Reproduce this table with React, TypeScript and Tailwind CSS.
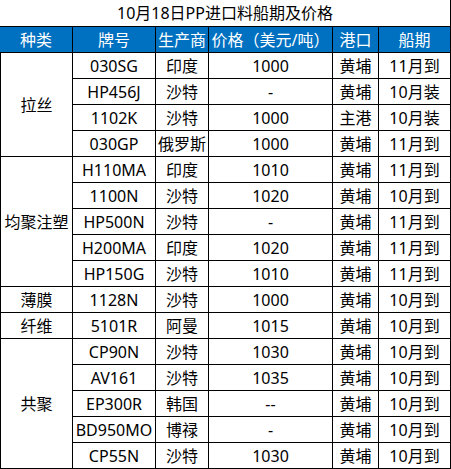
import React from "react";

type Row = { brand: string; origin: string; price: string; port: string; ship: string };

const groups: { name: string; rows: Row[] }[] = [
  {
    name: "拉丝",
    rows: [
      { brand: "030SG", origin: "印度", price: "1000", port: "黄埔", ship: "11月到" },
      { brand: "HP456J", origin: "沙特", price: "-", port: "黄埔", ship: "10月装" },
      { brand: "1102K", origin: "沙特", price: "1000", port: "主港", ship: "10月装" },
      { brand: "030GP", origin: "俄罗斯", price: "1000", port: "黄埔", ship: "11月到" },
    ],
  },
  {
    name: "均聚注塑",
    rows: [
      { brand: "H110MA", origin: "印度", price: "1010", port: "黄埔", ship: "11月到" },
      { brand: "1100N", origin: "沙特", price: "1020", port: "黄埔", ship: "10月到" },
      { brand: "HP500N", origin: "沙特", price: "-", port: "黄埔", ship: "11月到" },
      { brand: "H200MA", origin: "印度", price: "1020", port: "黄埔", ship: "11月到" },
      { brand: "HP150G", origin: "沙特", price: "1010", port: "黄埔", ship: "11月到" },
    ],
  },
  {
    name: "薄膜",
    rows: [{ brand: "1128N", origin: "沙特", price: "1000", port: "黄埔", ship: "10月到" }],
  },
  {
    name: "纤维",
    rows: [{ brand: "5101R", origin: "阿曼", price: "1015", port: "黄埔", ship: "10月到" }],
  },
  {
    name: "共聚",
    rows: [
      { brand: "CP90N", origin: "沙特", price: "1030", port: "黄埔", ship: "10月到" },
      { brand: "AV161", origin: "沙特", price: "1035", port: "黄埔", ship: "10月到" },
      { brand: "EP300R", origin: "韩国", price: "--", port: "黄埔", ship: "10月到" },
      { brand: "BD950MO", origin: "博禄", price: "-", port: "黄埔", ship: "10月到" },
      { brand: "CP55N", origin: "沙特", price: "1030", port: "黄埔", ship: "10月到" },
    ],
  },
];

const headers = ["种类", "牌号", "生产商", "价格（美元/吨）", "港口", "船期"];

const spanClass: Record<number, string> = {
  1: "row-span-1",
  4: "row-span-4",
  5: "row-span-5",
};

const cell = "flex items-center justify-center border-r border-b border-black whitespace-nowrap";

function App() {
  return (
    <div
      className="w-[451px] h-[469px] bg-white text-[16px] text-black leading-none"
      style={{ fontFamily: '"Noto Sans", "Noto Sans CJK SC", sans-serif' }}
    >
      <div className="grid grid-cols-[73px_83px_53px_124px_46px_72px] grid-rows-[27px_repeat(17,26px)]">
        {/* title */}
        <div className={`${cell} col-span-6`}>10月18日PP进口料船期及价格</div>

        {/* header */}
        {headers.map((h) => (
          <div key={h} className={`${cell} bg-[#0070c0] text-white`}>
            {h}
          </div>
        ))}

        {/* data */}
        {groups.map((g) =>
          g.rows.map((r, i) => (
            <React.Fragment key={g.name + r.brand}>
              {i === 0 && (
                <div className={`${cell} border-l ${spanClass[g.rows.length]}`}>{g.name}</div>
              )}
              <div className={cell}>{r.brand}</div>
              <div className={cell}>{r.origin}</div>
              <div className={cell}>{r.price}</div>
              <div className={cell}>{r.port}</div>
              <div className={cell}>{r.ship}</div>
            </React.Fragment>
          ))
        )}
      </div>
    </div>
  );
}

export default App;
